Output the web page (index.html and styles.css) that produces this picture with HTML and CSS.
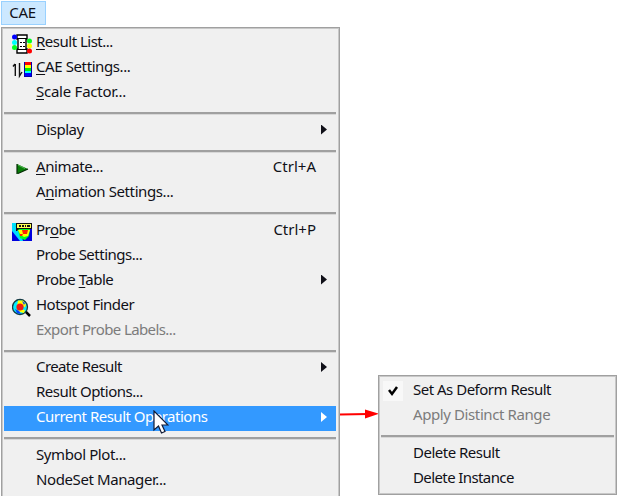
FILE: index.html
```html
<!DOCTYPE html>
<html lang="en">
<head>
<meta charset="utf-8">
<title>CAE menu</title>
<link rel="stylesheet" href="styles.css">
</head>
<body>
<div class="menubar"><span class="menubar-item">CAE</span></div>
<div class="menus">
<div class="menu main">
  <div class="item"><svg class="icon" viewBox="0 0 20 20"><path d="M5 1h10v4h-1v10h1v4H5v-4h1V5H5z" fill="#fff" stroke="#000" stroke-width="1.4"/><path d="M5 4.5h10M5 15.500h10" stroke="#000"/><path d="M8 8h2v1H8zM11 8h2v1h-2zM8 12h2v1H8zM11 12h2v1h-2z" fill="#000"/><circle cx="2.500" cy="3" r="2.500" fill="#00f"/><circle cx="2.500" cy="8.500" r="2.500" fill="#0ff"/><circle cx="2.500" cy="13.500" r="2.500" fill="#0f2"/><circle cx="17.500" cy="7" r="2.500" fill="#0f2"/><circle cx="17.500" cy="12" r="2.500" fill="#ff0"/><circle cx="17.500" cy="17" r="2.500" fill="#f00"/></svg><span class="label"><u>R</u>esult List...</span></div>
  <div class="item"><svg class="icon" viewBox="0 0 20 20"><path d="M3.300 17V5M1 7.500L3 5M7.500 4v13l2.500-4" fill="none" stroke="#111" stroke-width="1.400"/><path d="M12 3h8v15h-8z" fill="#00a"/><path d="M13 3h6v3h-6z" fill="#f00"/><path d="M13 6h6v3h-6z" fill="#ff0"/><path d="M13 9h6v3h-6z" fill="#0e0"/><path d="M13 12h6v2h-6z" fill="#0ff"/><path d="M13 14h6v3h-6z" fill="#00f"/></svg><span class="label wide"><u>C</u>AE Settings...</span></div>
  <div class="item"><span class="label wider"><u>S</u>cale Factor...</span></div>
  <div class="separator"></div>
  <div class="item"><span class="label">Display</span><span class="arrow"></span></div>
  <div class="separator"></div>
  <div class="item"><svg class="icon" viewBox="0 0 20 20"><path d="M5 5l11 5L5 15z" fill="#087d08"/><path d="M5 15V5M6 14.500l10-4.500" fill="none" stroke="#052c05" stroke-width="1.200"/><path d="M6 6l7 3.500" stroke="#55b655"/></svg><span class="label wide"><u>A</u>nimate...</span><span class="shortcut">Ctrl+A</span></div>
  <div class="item"><span class="label wide">A<u>n</u>imation Settings...</span></div>
  <div class="separator"></div>
  <div class="item"><svg class="icon" viewBox="0 0 20 20"><path d="M0 1h20v18H0z" fill="#00d"/><path d="M0 1h5l3 7 3 11H8L0 9z" fill="#0df"/><path d="M2 2l4 6 2 8 5 2 4-4 1-7H6z" fill="#0f2"/><path d="M6 8h12l-2 6-4 1-4-3z" fill="#ff0"/><path d="M10 8h6l-1 4h-4l-1 2H8v-2h3z" fill="#f20"/><path d="M4 1h16v6H7l-2 2H4z" fill="#111"/><path d="M5 2h14v4H5z" fill="#ff5"/><path d="M7 3h2v2H7zM10 3h2v2h-2zM13 3h1v2h-1zM15 3h3v2h-3z" fill="#111"/></svg><span class="label">Pr<u>o</u>be</span><span class="shortcut">Ctrl+P</span></div>
  <div class="item"><span class="label">Probe Settings...</span></div>
  <div class="item"><span class="label">Probe <u>T</u>able</span><span class="arrow"></span></div>
  <div class="item"><svg class="icon" viewBox="0 0 20 20"><path d="M13 14l5 5" stroke="#000" stroke-width="2.500"/><circle cx="8" cy="10" r="7.500" fill="#0ef" stroke="#153b44" stroke-width="1.300"/><path d="M6 3.500h5l3 4-1 3-4-3-4 2zM5 12l3 3 4 1 1-3z" fill="#ff0"/><path d="M3 12l4 2 2 3-4-1zM10 4l3 2-1 2z" fill="#083cff"/><circle cx="8" cy="10" r="3.600" fill="#f11b12"/></svg><span class="label">Hotspot Finder</span></div>
  <div class="item disabled"><span class="label tight">Export Probe Labels...</span></div>
  <div class="separator"></div>
  <div class="item"><span class="label tight">Create Result</span><span class="arrow"></span></div>
  <div class="item"><span class="label">Result Options...</span></div>
  <div class="item selected"><span class="label">Current Result Operations</span><span class="arrow"></span></div>
  <div class="separator"></div>
  <div class="item"><span class="label wide">Symbol Plot...</span></div>
  <div class="item"><span class="label wide">NodeSet Manager...</span></div>
</div>
<svg class="connector" viewBox="0 0 39 12"><path d="M0 6.600L28 6" stroke="#f00" stroke-width="2"/><path d="M25 1.500L39 5.800L25 10.500z" fill="#f00"/></svg>
<div class="menu sub">
  <div class="item"><span class="check"><svg viewBox="0 0 20 20"><path d="M6 9l3 4 5-7" fill="none" stroke="#000" stroke-width="2.500"/></svg></span><span class="label">Set As Deform Result</span></div>
  <div class="item disabled"><span class="label wide">Apply Distinct Range</span></div>
  <div class="separator"></div>
  <div class="item"><span class="label">Delete Result</span></div>
  <div class="item"><span class="label tight">Delete Instance</span></div>
</div>
</div>
<svg class="cursor" viewBox="0 0 16 25"><path d="M1 1v19l4.500-4 3 7 3.500-1.500-3-6.500H15z" fill="#fff" stroke="#111b35" stroke-width="1.200"/></svg>
</body>
</html>
```

FILE: styles.css
```css
* { box-sizing: border-box; }
body {
  margin: 0;
  height: 496px;
  overflow: hidden;
  background: #fff;
  color: #101018;
  font: 15px/25px "Noto Sans", "Open Sans", sans-serif;
}
.menubar { height: 27px; padding: 1px; }
.menubar-item {
  display: block;
  width: 45px;
  height: 24px;
  padding-right: 2px;
  border: 1px solid #99d1ff;
  background: #cce8ff;
  line-height: 21px;
  text-align: center;
  letter-spacing: -.3px;
}
.menus { display: flex; align-items: flex-start; }
.menu {
  flex: none;
  padding: 3px 2px;
  background: #f0f0f0;
  border: 1px solid #a0a0a0;
  box-shadow: inset 0 0 0 1px #c8c8c8;
}
.main { width: 339px; height: 480px; margin-left: 1px; padding-right: 3px; }
.sub { width: 239px; height: 120px; margin-top: 348px; }
.item { display: flex; position: relative; height: 25px; padding: 0 9px 0 32px; }
.label { line-height: 20px; white-space: nowrap; letter-spacing: -.5px; }
.wide { letter-spacing: -.4px; }
.wider { letter-spacing: -.25px; }
.tight { letter-spacing: -.6px; }
.label u { text-decoration-thickness: 1px; text-underline-offset: 2px; }
.shortcut { position: absolute; right: 20px; line-height: 20px; letter-spacing: 0; }
.separator { height: 12.5px; padding-top: 6px; }
.separator::before { content: ""; display: block; height: 2px; background: #a0a0a0; border-bottom: 1px solid #d8d8d8; }
.disabled { color: #7c7c7c; }
.selected { background: #3399ff; color: #fff; }
.arrow {
  margin: 6px 0 0 auto;
  width: 6px;
  height: 10px;
  background: currentColor;
  clip-path: polygon(0 0, 100% 50%, 0 100%);
}
.icon { position: absolute; left: 8px; top: 3px; width: 20px; height: 20px; }
.check { position: absolute; left: 2px; top: 2px; width: 20px; height: 20px; background: #f8f8f8; }
.check svg { display: block; width: 20px; height: 20px; }
.connector { flex: none; width: 39px; height: 12px; margin-top: 381px; margin-right: -1px; }
.cursor { position: absolute; left: 153px; top: 410px; width: 16px; height: 25px; }
```
